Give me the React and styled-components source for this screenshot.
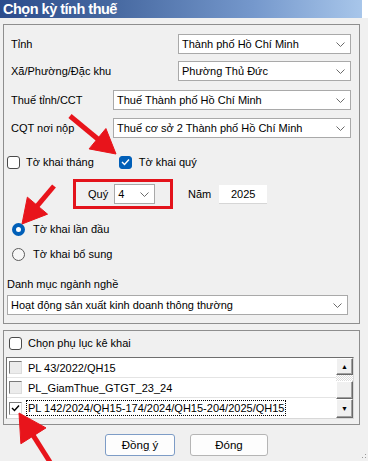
import React from 'react';
import styled, { createGlobalStyle } from 'styled-components';

const GlobalStyle = createGlobalStyle`
  html, body { margin: 0; padding: 0; background: #fff; }
  body {
    font-family: "Liberation Sans", Arial, sans-serif;
    font-size: 11px;
    color: #000;
  }
  * { box-sizing: border-box; }
`;

const Window = styled.div`
  position: relative;
  width: 368px;
  height: 461px;
  background: #f0f0f0;
  overflow: hidden;
  display: flex;
  flex-direction: column;
`;

const TitleRow = styled.div`
  display: flex;
  height: 18px;
  background: #fff;
`;

const TitleBar = styled.div`
  width: 362px;
  height: 18px;
  padding-left: 3px;
  line-height: 18px;
  color: #fff;
  font-weight: bold;
  font-size: 14.5px;
  letter-spacing: -0.5px;
  background: linear-gradient(90deg, #2c4c8c 0%, #45679f 30%, #7598cc 70%, #a8c6ea 100%);
`;

const Body = styled.div`
  display: flex;
  flex-direction: column;
  padding: 6px 8px 0 3px;
`;

const Group = styled.div`
  border: 1px solid #8e8e8e;
  height: ${p => p.$h}px;
  margin-top: ${p => p.$mt || 0}px;
  display: flex;
  flex-direction: column;
`;

const Row = styled.div`
  display: flex;
  align-items: center;
  height: ${p => p.$h || 20}px;
  margin-top: ${p => p.$mt || 0}px;
  padding-left: ${p => p.$pl || 0}px;
  padding-right: ${p => p.$pr || 0}px;
  gap: ${p => p.$gap || 0}px;
  flex-shrink: 0;
`;

const Label = styled.span`
  width: ${p => (p.$w ? `${p.$w}px` : 'auto')};
  flex-shrink: 0;
  white-space: nowrap;
  margin-left: ${p => p.$ml || 0}px;
`;

const SelectBox = styled.div`
  display: flex;
  align-items: center;
  justify-content: space-between;
  height: 20px;
  width: ${p => (p.$w ? `${p.$w}px` : 'auto')};
  flex: ${p => (p.$w ? '0 0 auto' : '1')};
  background: #fff;
  border: 1px solid #a9a9a9;
  padding: 0 5px 0 3px;
  white-space: nowrap;
  overflow: hidden;
`;

const Chevron = () => (
  <svg width="9" height="5" viewBox="0 0 9 5">
    <polyline points="0.5,0.5 4.5,4.5 8.5,0.5" fill="none" stroke="#6b6b6b" strokeWidth="1" />
  </svg>
);

const Select = ({ children, w }) => (
  <SelectBox $w={w}>
    <span>{children}</span>
    <Chevron />
  </SelectBox>
);

const CheckBox = styled.span`
  width: 13px;
  height: 13px;
  flex-shrink: 0;
  border-radius: 3px;
  display: inline-flex;
  align-items: center;
  justify-content: center;
  border: 1px solid ${p => (p.$checked ? '#005fb8' : '#4a4a4a')};
  background: ${p => (p.$checked ? '#005fb8' : '#fff')};
  margin-left: ${p => p.$ml || 0}px;
`;

const Check = ({ color = '#fff' }) => (
  <svg width="9" height="8" viewBox="0 0 9 8">
    <polyline points="1,4 3.5,6.5 8,1.5" fill="none" stroke={color} strokeWidth="1.4" />
  </svg>
);

const Radio = styled.span`
  width: 13px;
  height: 13px;
  border-radius: 50%;
  flex-shrink: 0;
  border: ${p => (p.$checked ? '4px solid #005fb8' : '1px solid #5a5a5a')};
  background: ${p => (p.$checked ? '#fff' : '#f7f7f7')};
`;

const QuarterFrame = styled.div`
  display: flex;
  align-items: center;
  gap: 6px;
  width: 100px;
  height: 30px;
  border: 3px solid #e3131b;
  padding-left: 12px;
`;

const YearInput = styled.div`
  width: 48px;
  height: 19px;
  background: #fff;
  border-bottom: 1px solid #d6d6d6;
  display: flex;
  align-items: center;
  justify-content: center;
  margin-left: 8px;
`;

const ListBox = styled.div`
  display: flex;
  width: 348px;
  height: 62px;
  margin-left: 2px;
  margin-top: ${p => p.$mt || 0}px;
  background: #fff;
  border: 1px solid;
  border-color: #6e6e6e #d8d8d8 #d8d8d8 #6e6e6e;
`;

const Items = styled.div`
  flex: 1;
  display: flex;
  flex-direction: column;
`;

const Item = styled.div`
  height: 20px;
  display: flex;
  align-items: center;
  padding-left: 2px;
  gap: 6px;
  border-bottom: ${p => (p.$last ? 'none' : '1px solid #e4e4e4')};
  white-space: nowrap;
`;

const ItemBox = styled.span`
  width: 13px;
  height: 13px;
  flex-shrink: 0;
  display: inline-flex;
  align-items: center;
  justify-content: center;
  border: 1px solid;
  border-color: #7a7a7a #dcdcdc #dcdcdc #7a7a7a;
  background: ${p => (p.$checked ? '#fff' : '#ececec')};
`;

const ItemText = styled.span`
  padding: 1px 1px;
  margin-left: -2px;
  border: 1px dotted ${p => (p.$focus ? '#000' : 'transparent')};
`;

const ScrollBar = styled.div`
  width: 17px;
  display: flex;
  flex-direction: column;
`;

const ScrollBtn = styled.div`
  height: ${p => p.$h}px;
  background: #f0f0f0;
  border: 1px solid;
  border-color: #fff #696969 #696969 #fff;
  box-shadow: inset -1px -1px 0 #a0a0a0;
  display: flex;
  align-items: center;
  justify-content: center;
  font-size: 7px;
  line-height: 1;
`;

const Track = styled.div`
  height: ${p => p.$h}px;
  background-color: #fff;
  background-image: repeating-conic-gradient(#dcdcdc 0% 25%, #fff 0% 50%);
  background-size: 2px 2px;
`;

const ButtonRow = styled.div`
  display: flex;
  gap: 15px;
  margin-top: 9px;
  padding-left: 102px;
`;

const Button = styled.div`
  width: ${p => p.$w}px;
  height: 22px;
  border-radius: 3px;
  border: 1px solid ${p => (p.$default ? '#7d9cc6' : '#b5b5b5')};
  background: #fdfdfd;
  display: flex;
  align-items: center;
  justify-content: center;
  font-size: 11.5px;
  u { text-decoration: underline; }
`;

const Overlay = styled.svg`
  position: absolute;
  left: 0;
  top: 0;
  pointer-events: none;
`;

const Arrow = ({ tail, tip, head }) => {
  const [tx, ty] = tail;
  const [px, py] = tip;
  const dx = px - tx;
  const dy = py - ty;
  const len = Math.hypot(dx, dy);
  const ux = dx / len;
  const uy = dy / len;
  const bx = px - ux * head;
  const by = py - uy * head;
  const hw = head * 0.55;
  const p1 = `${bx - uy * hw},${by + ux * hw}`;
  const p2 = `${bx + uy * hw},${by - ux * hw}`;
  return (
    <g fill="#e8141b" stroke="#e8141b">
      <line x1={tx} y1={ty} x2={bx + ux * 2} y2={by + uy * 2} strokeWidth="5" />
      <polygon points={`${px},${py} ${p1} ${p2}`} strokeWidth="1" strokeLinejoin="round" />
    </g>
  );
};

export default function App() {
  return (
    <>
      <GlobalStyle />
      <Window>
        <TitleRow>
          <TitleBar>Chọn kỳ tính thuế</TitleBar>
        </TitleRow>
        <Body>
          <Group $h={300}>
            <Row $mt={9} $pl={7} $pr={8}>
              <Label $w={167}>Tỉnh</Label>
              <Select>Thành phố Hồ Chí Minh</Select>
            </Row>
            <Row $mt={7} $pl={7} $pr={8}>
              <Label $w={167}>Xã/Phường/Đặc khu</Label>
              <Select>Phường Thủ Đức</Select>
            </Row>
            <Row $mt={9} $pl={7} $pr={8}>
              <Label $w={102}>Thuế tỉnh/CCT</Label>
              <Select>Thuế Thành phố Hồ Chí Minh</Select>
            </Row>
            <Row $mt={8} $pl={7} $pr={8}>
              <Label $w={102}>CQT nơi nộp</Label>
              <Select>Thuế cơ sở 2 Thành phố Hồ Chí Minh</Select>
            </Row>
            <Row $h={14} $mt={17} $pl={3}>
              <CheckBox />
              <Label $ml={6}>Tờ khai tháng</Label>
              <CheckBox $checked $ml={25}>
                <Check />
              </CheckBox>
              <Label $ml={7}>Tờ khai quý</Label>
            </Row>
            <Row $h={30} $mt={10} $pl={69}>
              <QuarterFrame>
                <span>Quý</span>
                <Select w={41}>4</Select>
              </QuarterFrame>
              <Label $ml={15}>Năm</Label>
              <YearInput>2025</YearInput>
            </Row>
            <Row $h={14} $mt={13} $pl={8} $gap={8}>
              <Radio $checked />
              <span>Tờ khai lần đầu</span>
            </Row>
            <Row $h={14} $mt={11} $pl={8} $gap={8}>
              <Radio />
              <span>Tờ khai bổ sung</span>
            </Row>
            <Row $h={14} $mt={16} $pl={3}>
              <span>Danh mục ngành nghề</span>
            </Row>
            <Row $mt={4} $pl={3} $pr={11}>
              <Select>Hoạt động sản xuất kinh doanh thông thường</Select>
            </Row>
          </Group>

          <Group $h={95} $mt={6}>
            <Row $h={14} $mt={5} $pl={5} $gap={6}>
              <CheckBox />
              <span>Chọn phụ lục kê khai</span>
            </Row>
            <ListBox $mt={7}>
              <Items>
                <Item>
                  <ItemBox />
                  <ItemText>PL 43/2022/QH15</ItemText>
                </Item>
                <Item>
                  <ItemBox />
                  <ItemText>PL_GiamThue_GTGT_23_24</ItemText>
                </Item>
                <Item $last>
                  <ItemBox $checked>
                    <Check color="#000" />
                  </ItemBox>
                  <ItemText $focus>PL 142/2024/QH15-174/2024/QH15-204/2025/QH15</ItemText>
                </Item>
              </Items>
              <ScrollBar>
                <ScrollBtn $h={17}>▲</ScrollBtn>
                <Track $h={6} />
                <ScrollBtn $h={18} />
                <ScrollBtn $h={19}>▼</ScrollBtn>
              </ScrollBar>
            </ListBox>
          </Group>

          <ButtonRow>
            <Button $w={70} $default>
              <span>Đồn<u>g</u> ý</span>
            </Button>
            <Button $w={78}>
              <span>Đón<u>g</u></span>
            </Button>
          </ButtonRow>
        </Body>

        <Overlay width="368" height="461" viewBox="0 0 368 461">
          <Arrow tail={[70, 116]} tip={[116, 154]} head={24} />
          <Arrow tail={[54, 186]} tip={[22, 224]} head={24} />
          <Arrow tail={[50, 462]} tip={[19, 413]} head={27} />
          <g fill="#9a9a9a">
            <rect x="365" y="457" width="1" height="1" />
            <rect x="365" y="454" width="1" height="1" />
            <rect x="362" y="457" width="1" height="1" />
          </g>
        </Overlay>
      </Window>
    </>
  );
}
